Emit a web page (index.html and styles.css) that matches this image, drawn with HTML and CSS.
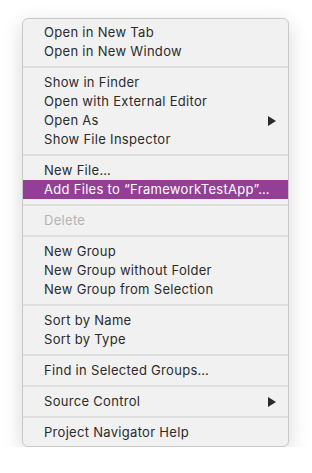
FILE: index.html
```html
<!DOCTYPE html>
<html lang="en">
<head>
<meta charset="UTF-8">
<title>Context Menu</title>
<meta name="viewport" content="width=device-width, initial-scale=1">
<link rel="stylesheet" href="styles.css">
</head>
<body>
<div class="menu">
  <div class="item">Open in New Tab</div>
  <div class="item">Open in New Window</div>
  <div class="sep"></div>
  <div class="item">Show in Finder</div>
  <div class="item">Open with External Editor</div>
  <div class="item">Open As
    <svg class="arrow" viewBox="0 0 8 10"><path d="M0 0 L8 5 L0 10 Z"/></svg>
  </div>
  <div class="item">Show File Inspector</div>
  <div class="sep"></div>
  <div class="item">New File…</div>
  <div class="item active">Add Files to “FrameworkTestApp”…</div>
  <div class="sep"></div>
  <div class="item disabled">Delete</div>
  <div class="sep"></div>
  <div class="item">New Group</div>
  <div class="item">New Group without Folder</div>
  <div class="item">New Group from Selection</div>
  <div class="sep"></div>
  <div class="item">Sort by Name</div>
  <div class="item">Sort by Type</div>
  <div class="sep"></div>
  <div class="item">Find in Selected Groups…</div>
  <div class="sep"></div>
  <div class="item">Source Control
    <svg class="arrow" viewBox="0 0 8 10"><path d="M0 0 L8 5 L0 10 Z"/></svg>
  </div>
  <div class="sep"></div>
  <div class="item">Project Navigator Help</div>
</div>
</body>
</html>
```

FILE: styles.css
```css
body {
  margin: 0;
  background: #fff;
  font-family: Inter, "Noto Sans", sans-serif;
}

.menu {
  margin: 18px 0 0 22px;
  width: 265px;
  padding: 4px 0;
  background: #f1f1f1;
  border: 1px solid #c9c9c9;
  border-radius: 6px;
  box-shadow: 0 6px 20px rgba(0,0,0,0.16);
}

.item {
  display: flex;
  align-items: center;
  justify-content: space-between;
  height: 19px;
  padding: 0 12px 0 21px;
  font-size: 13px;
  line-height: 19px;
  letter-spacing: 0.3px;
  color: #2b2b2b;
}

.item.active {
  background: #933f95;
  color: #fff;
}

.item.disabled {
  color: #b3b3b3;
}

.arrow {
  width: 8px;
  height: 10px;
  fill: #2b2b2b;
}

.sep {
  height: 2px;
  margin: 5px 0;
  background: #dedede;
}
```
